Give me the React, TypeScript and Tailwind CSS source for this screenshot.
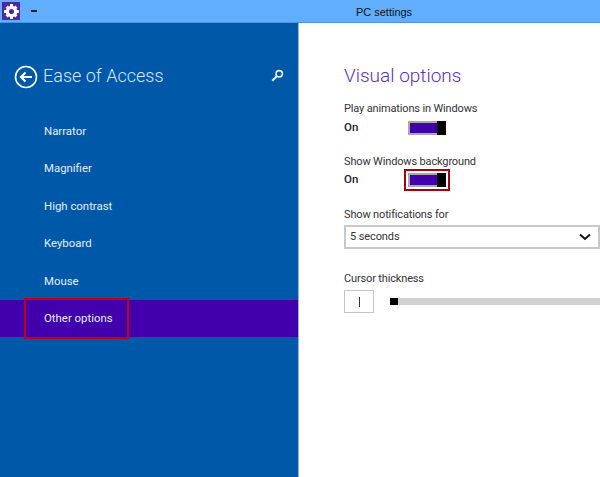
const navItems = ["Narrator", "Magnifier", "High contrast", "Keyboard", "Mouse", "Other options"];

function GearIcon() {
  return (
    <svg width="17" height="17" viewBox="0 0 16 16">
      <circle cx="8" cy="8" r="3.9" fill="none" stroke="#fff" strokeWidth="3" />
      <path
        d="M6.6 1h2.8v3H6.6zM6.6 12h2.8v3H6.6zM1 6.6h3v2.8H1zM12 6.6h3v2.8h-3zM2.4 4.4l2-2 2 2-2 2zM9.6 11.6l2-2 2 2-2 2zM2.4 11.6l2-2 2 2-2 2zM9.6 4.4l2-2 2 2-2 2z"
        fill="#fff"
      />
    </svg>
  );
}

function BackIcon() {
  return (
    <svg width="24" height="24" viewBox="0 0 24 24" fill="none" stroke="#fff">
      <circle cx="12" cy="12" r="10.5" strokeWidth="1.6" />
      <path d="M18 12H7M11.5 7.5 7 12l4.5 4.5" strokeWidth="2.2" />
    </svg>
  );
}

function SearchIcon() {
  return (
    <svg width="13" height="13" viewBox="0 0 13 13" fill="none" stroke="#e6eef8">
      <circle cx="8.2" cy="4.8" r="3.2" strokeWidth="1.6" />
      <path d="M5.8 7.2 1.2 11.8" strokeWidth="2" />
    </svg>
  );
}

function ChevronIcon() {
  return (
    <svg width="12" height="8" viewBox="0 0 12 8" fill="none" stroke="#111">
      <path d="M1 1.5 6 6l5-4.5" strokeWidth="2" />
    </svg>
  );
}

function Toggle() {
  return (
    <div className="flex h-[14px] w-[38px] bg-[#a9a9a9] pl-[2px]">
      <div className="my-[2px] flex-1 bg-[#4100a9]" />
      <div className="w-[9px] bg-black" />
    </div>
  );
}

export default function App() {
  return (
    <div className="flex h-[477px] w-[600px] flex-col overflow-hidden bg-white font-['Roboto','Noto_Sans',sans-serif]">
      <div className="relative flex h-[23px] items-center border-b border-[#4a95e0] bg-[#62aefe]">
        <div className="ml-[2px] flex h-[18px] w-[18px] items-center justify-center bg-[#4f2a9e]">
          <GearIcon />
        </div>
        <div className="ml-[11px] h-[2px] w-[6px] bg-[#222]" />
        <div className="absolute inset-x-0 top-[5px] pl-[168px] text-center font-['Liberation_Sans',sans-serif] text-[11px] leading-[14px] text-[#111]">
          PC settings
        </div>
      </div>

      <div className="flex flex-1">
        <div className="flex w-[299px] flex-col border-r border-[#8db8e8] bg-[#0059a8]">
          <div className="flex h-[66px] items-end pl-[14px] pr-[14px]">
            <BackIcon />
            <div className="ml-[5px] flex-1 text-[18px] leading-[26px] font-light text-[#d5e5f5]">
              Ease of Access
            </div>
            <div className="mb-[7px]">
              <SearchIcon />
            </div>
          </div>
          <div className="mt-[23px] flex flex-col">
            {navItems.map((item) => {
              const active = item === "Other options";
              return (
                <div
                  key={item}
                  className={`relative flex h-[37.5px] items-center pt-px pl-[44px] text-[11.4px] text-[#e4eef8] ${
                    active ? "bg-[#4100ab]" : ""
                  }`}
                >
                  {item}
                  {active && (
                    <div className="absolute top-[-2px] bottom-[-2px] left-[24px] w-[105px] border-2 border-[#c00010]" />
                  )}
                </div>
              );
            })}
          </div>
        </div>

        <div className="flex-1 pt-[40px] pl-[45px]">
          <h1 className="text-[19px] leading-[26px] font-light text-[#5b2fc4]">Visual options</h1>

          <div className="mt-[12px] text-[11px] leading-[15px] tracking-[-0.15px] text-[#333]">
            Play animations in Windows
          </div>
          <div className="mt-[4px] flex h-[15px] items-center">
            <div className="w-[64px] text-[11.5px] font-medium text-[#222]">On</div>
            <Toggle />
          </div>

          <div className="mt-[19px] text-[11px] leading-[15px] tracking-[-0.15px] text-[#333]">
            Show Windows background
          </div>
          <div className="mt-[3px] flex h-[15px] items-center">
            <div className="w-[64px] text-[11.5px] font-medium text-[#222]">On</div>
            <div className="relative">
              <Toggle />
              <div className="absolute -top-[4px] -right-[4px] -bottom-[4px] -left-[4px] border-2 border-[#a80010]" />
            </div>
          </div>

          <div className="mt-[20px] text-[11px] leading-[15px] tracking-[-0.15px] text-[#333]">
            Show notifications for
          </div>
          <div className="mt-[3px] flex h-[24px] w-[256px] items-center justify-between border-2 border-[#c8c8c8] pr-[7px] pl-[4px] text-[11px] tracking-[-0.1px] text-[#333]">
            5 seconds
            <ChevronIcon />
          </div>

          <div className="mt-[22px] text-[11px] leading-[15px] tracking-[-0.15px] text-[#333]">
            Cursor thickness
          </div>
          <div className="mt-[4px] flex items-center">
            <div className="flex h-[23px] w-[30px] items-center justify-center border border-[#c4c4c4]">
              <div className="h-[10px] w-px bg-[#333]" />
            </div>
            <div className="ml-[16px] flex h-[7px] flex-1 bg-[#d2d2d2]">
              <div className="w-[8px] bg-black" />
            </div>
          </div>
        </div>
      </div>
    </div>
  );
}
